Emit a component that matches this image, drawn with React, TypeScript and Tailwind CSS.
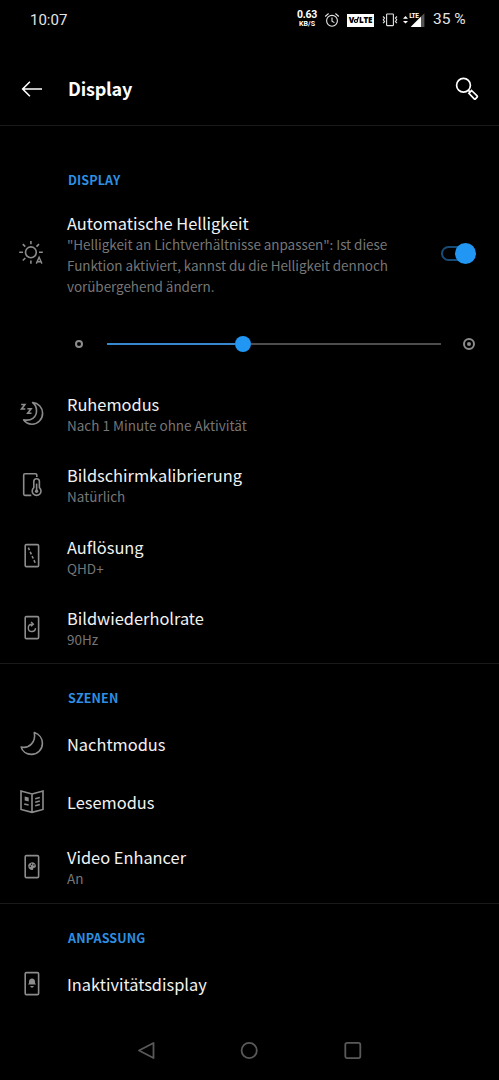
import type { ReactNode } from "react";

interface IconProps {
  children: ReactNode;
}

// 28px canvas shared by all list icons
const ListIcon = ({ children }: IconProps) => (
  <svg
    width="28"
    height="28"
    viewBox="0 0 28 28"
    fill="none"
    stroke="#8c8c8c"
    strokeWidth="1.6"
    className="mr-[21px] ml-[18px] shrink-0"
  >
    {children}
  </svg>
);

const BrightnessIcon = () => (
  <ListIcon>
    <circle cx="12.9" cy="13.3" r="5.4" />
    <path d="M12.900 2v3.200M12.900 21.600v3.200M1.200 13.300h3.800M21 13.300h3.800M4.800 5.100l2.500 2.500M21 5.100l-2.500 2.500M4.800 21.500l2.500-2.500" />
    <path d="M18.300 24.600 21.100 18.200l2.800 6.400M19.300 22.700h3.600" strokeWidth="1.400" />
  </ListIcon>
);

const SleepIcon = () => (
  <ListIcon>
    <path
      d="M14.600 2.500c5.900.5 10 5.100 10 10.700 0 6.100-4.700 11-10.600 11-3.400 0-6.600-1.600-8.400-4.400C13 21.400 18.800 17.400 18.500 10.400c-.1-3.400-1.400-6.100-3.900-7.900Z"
      strokeLinejoin="round"
    />
    <path d="M3.200 4.500h3.700L3.500 9h3.800M9.400 8.800h3.700l-3.400 4.500h3.800" strokeWidth="1.600" />
  </ListIcon>
);

const CalibrationIcon = () => (
  <ListIcon>
    <path d="M18.800 6.100V4.100c0-.8-.5-1.300-1.300-1.300H7c-.8 0-1.300.5-1.300 1.300v19c0 .8.500 1.300 1.300 1.300h6.300" />
    <path d="M15.800 16.600v-6.100a2.800 2.800 0 0 1 5.600 0v6.100a4.400 4.400 0 1 1-5.600 0Z" />
    <path d="M18.600 12.600v7" />
    <circle cx="18.600" cy="20.300" r="1.700" fill="#8c8c8c" stroke="none" />
  </ListIcon>
);

const PhoneIcon = ({ children }: IconProps) => (
  <ListIcon>
    <rect x="7.200" y="2.600" width="13.400" height="22" rx="1.200" />
    {children}
  </ListIcon>
);

const ResolutionIcon = () => (
  <PhoneIcon>
    <path d="m10.300 5.600 7.400 16.400" strokeDasharray="2.800 1.800" strokeWidth="1.600" />
  </PhoneIcon>
);

const RefreshIcon = () => (
  <PhoneIcon>
    <path d="M13.800 10.300a3.600 3.600 0 1 0 3.700 3.800M11.500 11.300c1-.9 2.200-1.200 3.500-1M13.100 8l2.300 2.300-2.400 2" strokeWidth="1.400" />
  </PhoneIcon>
);

const MoonIcon = () => (
  <ListIcon>
    <path
      d="M16.300 2.600c4.900 1.500 8.100 5.900 8.100 10.900 0 6.200-4.900 10.900-10.900 10.900-5 0-9.200-3-10.300-7.400 7.900 1.900 14.900-4.700 13.100-14.400Z"
      strokeLinejoin="round"
    />
  </ListIcon>
);

const BookIcon = () => (
  <ListIcon>
    <path d="m14 6 11-3v18.500l-11 2.800-11-2.800V3l11 3ZM14 6v18.300" />
    <path d="m6.200 16 4.400 1M17.200 10.700l4.600-1.200M17.200 14.200l4.600-1.200M17.200 17.700l4.600-1.200" strokeWidth="1.600" />
    <path d="m6.700 8.600 4 1v4l-4-1Z" fill="#8c8c8c" stroke="none" />
  </ListIcon>
);

const EnhancerIcon = () => (
  <PhoneIcon>
    <path
      d="M13.500 9.400c2.300-.3 4.400 1.500 4.400 3.500 0 1.500-1.200 1.800-2 1.900-.9.200-.4 1.200-1 1.900-.9 1-4.700-.4-4.700-3.600 0-2 1.300-3.500 3.300-3.700Z"
      fill="#8c8c8c"
      stroke="none"
    />
    <g fill="#000" stroke="none">
      <circle cx="12.300" cy="13.200" r=".7" />
      <circle cx="13.600" cy="11.200" r=".7" />
      <circle cx="15.900" cy="12" r=".7" />
    </g>
  </PhoneIcon>
);

const AmbientIcon = () => (
  <PhoneIcon>
    <path
      d="M14 8.400c-2 0-3 1.400-3 3.200v1.500l-1 1.300h8l-1-1.300v-1.500c0-1.800-1-3.200-3-3.200ZM12.300 15.900h3.400c0 1-.7 1.700-1.700 1.700s-1.700-.7-1.700-1.700Z"
      fill="#8c8c8c"
      stroke="none"
    />
  </PhoneIcon>
);

const StatusBar = () => (
  <div className="flex h-10 items-center pl-[30px] text-[#e4e4e4]">
    <span className="w-[266px] font-['Roboto'] text-[15px]">10:07</span>
    <div className="mt-[-2px] w-[22px] text-center font-['Roboto'] font-bold text-white">
      <div className="text-[10.5px] leading-[10px] tracking-[-0.3px]">0.63</div>
      <div className="text-[7px] leading-[8px] tracking-[0.1px]">KB/S</div>
    </div>
    <svg width="16" height="16" viewBox="0 0 16 16" fill="none" stroke="#e4e4e4" strokeWidth="1.1" className="ml-[6px]">
      <circle cx="8" cy="8.800" r="5.400" />
      <path d="M8 5.600v3.500l2.400 1.500M1.200 4.500 4.600 1.500M14.800 4.500l-3.400-3" />
    </svg>
    <div className="ml-[7px] flex h-[13px] w-[27px] items-center justify-center bg-white font-['Open_Sans'] text-[8px] font-extrabold tracking-[-0.2px] text-black">
      <span>V</span>
      <svg width="5" height="8" viewBox="0 0 5 8" fill="none" stroke="#000" strokeWidth="1.200">
        <circle cx="2" cy="5" r="1.500" />
        <path d="M3.200 4.500 4.500.8" />
      </svg>
      <span>LTE</span>
    </div>
    <svg width="16" height="16" viewBox="0 0 16 16" fill="none" stroke="#e4e4e4" strokeWidth="1.1" className="ml-[8px]">
      <rect x="4.600" y="2" width="6.800" height="11.600" rx=".6" />
      <path d="m1 4.500 1.600 1.500-1.300 1.800 1.300 1.800L1 11.100M15 4.500 13.400 6l1.300 1.800-1.300 1.800 1.600 1.500" />
    </svg>
    <svg width="22" height="18" viewBox="0 0 22 18" className="ml-[5px]">
      <path d="M0 7.700 2.500 5 5 7.700ZM0 9.900h5l-2.500 2.700Z" fill="#fff" />
      <path d="M7.600 16 18.300 5.300V16Z" fill="#fff" />
      <path d="M18.300 5.300 21.400 2.200V16h-3.100Z" fill="#555" />
      <text x="6.200" y="7.400" fill="#fff" fontFamily="Roboto" fontSize="6.600" fontWeight="700" textLength="9.800">
        LTE
      </text>
    </svg>
    <span className="ml-[8px] whitespace-nowrap font-['Roboto'] text-[15.5px]">35 %</span>
  </div>
);

const Header = () => (
  <header className="flex h-[86px] items-center border-b border-[#1a1a1a] pt-[11px] text-white">
    <svg width="22" height="18" viewBox="0 0 22 18" fill="none" stroke="currentColor" strokeWidth="1.6" className="mt-px ml-[21px]">
      <path d="M21 9H1.700M8.900 1.800 1.700 9l7.200 7.200" />
    </svg>
    <h1 className="ml-[25px] text-[18px] leading-6 font-bold tracking-[-0.2px]">Display</h1>
    <svg width="24" height="24" viewBox="0 0 24 24" fill="none" stroke="currentColor" strokeWidth="1.7" className="mt-px mr-[20px] ml-auto">
      <circle cx="8.500" cy="8.300" r="6.900" />
      <path d="m13.200 13.200 2 2M16.600 13.500l5.500 5.400c.4.400.4.900 0 1.300l-1.600 1.600c-.4.400-.9.400-1.300 0l-5.300-5.500Z" />
    </svg>
  </header>
);

interface RowProps {
  icon: ReactNode;
  title: string;
  value?: string;
}

const SettingRow = ({ icon, title, value }: RowProps) => (
  <div className={value ? "flex h-[71.3px] items-center" : "flex h-[58px] items-center"}>
    {icon}
    <div className={value ? "pt-px" : "pb-px"}>
      <div className="text-[16.4px] leading-[22px] text-[#f2f2f2]">{title}</div>
      {value && <div className="text-[13.5px] leading-[20px] text-[#767676]">{value}</div>}
    </div>
  </div>
);

const SectionLabel = ({ title }: { title: string }) => (
  <h2 className="ml-[68px] h-5 text-[12.5px] leading-[19px] font-bold tracking-[0.15px] text-[#2e8fe0]">{title}</h2>
);

const AutoBrightness = () => (
  <div className="flex h-[126px] items-center">
    <BrightnessIcon />
    <div className="w-[340px] pt-[3px] whitespace-nowrap">
      <div className="text-[16.4px] leading-[22px] text-[#f2f2f2]">Automatische Helligkeit</div>
      <p className="text-[13.5px] leading-[21.3px] tracking-[-0.06px] text-[#767676]">
        "Helligkeit an Lichtverhältnisse anpassen": Ist diese
        <br />
        Funktion aktiviert, kannst du die Helligkeit dennoch
        <br />
        vorübergehend ändern.
      </p>
    </div>
    <div className="ml-[34px] flex h-[15px] w-[34px] items-center justify-end rounded-full border-2 border-[#174a75]">
      <div className="-mr-[3px] size-[21px] shrink-0 rounded-full bg-[#2196f3]" />
    </div>
  </div>
);

const BrightnessSlider = () => (
  <div className="flex h-[56px] items-center">
    <div className="ml-[75px] size-[8px] rounded-full border-2 border-[#8c8c8c]" />
    <div className="ml-[24px] flex w-[334px] items-center">
      <div className="h-[2px] w-[128px] bg-[#3687d0]" />
      <div className="size-4 rounded-full bg-[#2196f3]" />
      <div className="h-[2px] flex-1 bg-[#4d4d4d]" />
    </div>
    <div className="ml-[22px] flex size-[12px] items-center justify-center rounded-full border-2 border-[#8c8c8c]">
      <div className="size-1 rounded-full bg-[#8c8c8c]" />
    </div>
  </div>
);

const NavBar = () => (
  <nav className="mt-auto flex h-[60px] items-center justify-center gap-[84px]">
    <svg width="19" height="19" viewBox="0 0 19 19" fill="none" stroke="#595959" strokeWidth="1.8" strokeLinejoin="round">
      <path d="M16.500 2v15L2 9.500Z" />
    </svg>
    <svg width="19" height="19" viewBox="0 0 19 19" fill="none" stroke="#595959" strokeWidth="1.8">
      <circle cx="9.200" cy="9.500" r="7.600" />
    </svg>
    <svg width="19" height="19" viewBox="0 0 19 19" fill="none" stroke="#595959" strokeWidth="1.8">
      <rect x="2.300" y="1.900" width="15" height="15.200" rx="1.800" />
    </svg>
  </nav>
);

export default function App() {
  return (
    <div className="flex h-[1080px] w-[499px] flex-col overflow-hidden bg-black font-['Noto_Sans_CJK_SC','Noto_Sans',sans-serif]">
      <StatusBar />
      <Header />
      <section className="h-[538px] border-b border-[#1a1a1a] pt-[44px]">
        <SectionLabel title="DISPLAY" />
        <AutoBrightness />
        <BrightnessSlider />
        <div className="pt-[6px]">
          <SettingRow icon={<SleepIcon />} title="Ruhemodus" value="Nach 1 Minute ohne Aktivität" />
          <SettingRow icon={<CalibrationIcon />} title="Bildschirmkalibrierung" value="Natürlich" />
          <SettingRow icon={<ResolutionIcon />} title="Auflösung" value="QHD+" />
          <SettingRow icon={<RefreshIcon />} title="Bildwiederholrate" value="90Hz" />
        </div>
      </section>
      <section className="h-[240px] border-b border-[#1a1a1a] pt-[24px]">
        <SectionLabel title="SZENEN" />
        <div className="pt-[7px]">
          <SettingRow icon={<MoonIcon />} title="Nachtmodus" />
          <SettingRow icon={<BookIcon />} title="Lesemodus" />
          <SettingRow icon={<EnhancerIcon />} title="Video Enhancer" value="An" />
        </div>
      </section>
      <section className="pt-[24px]">
        <SectionLabel title="ANPASSUNG" />
        <div className="pt-[7px]">
          <SettingRow icon={<AmbientIcon />} title="Inaktivitätsdisplay" />
        </div>
      </section>
      <NavBar />
    </div>
  );
}
